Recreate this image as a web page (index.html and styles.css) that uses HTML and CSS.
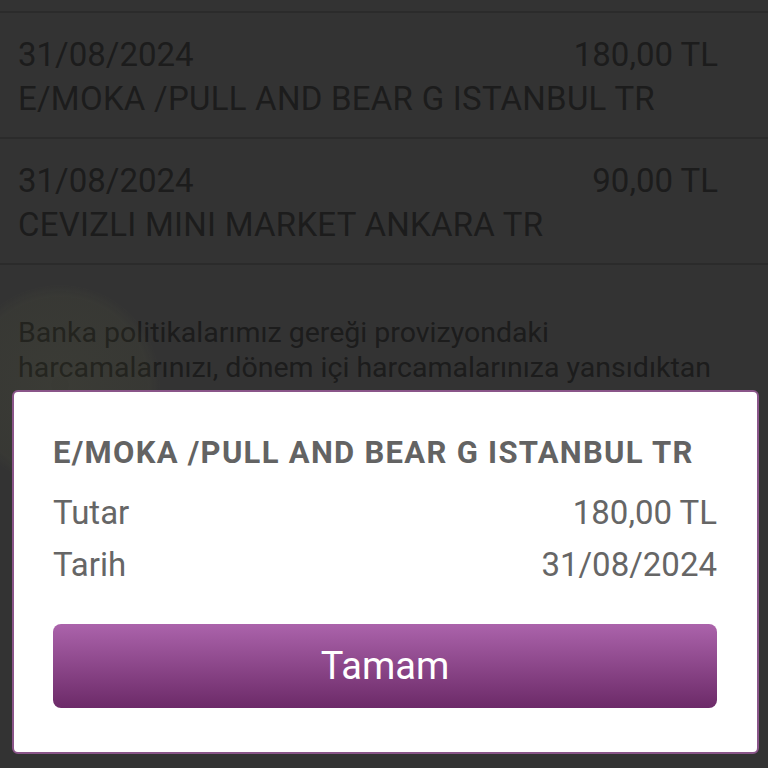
FILE: index.html
```html
<!DOCTYPE html>
<html lang="tr">
<head>
    <meta charset="UTF-8">
    <meta name="viewport" content="width=device-width, initial-scale=1.0">
    <title>Provizyondaki Harcamalar</title>
    <link rel="stylesheet" href="styles.css">
</head>
<body>
    <div class="page">
        <div class="list">
            <div class="row-prev"></div>

            <div class="row">
                <div class="row-top">
                    <span class="date">31/08/2024</span>
                    <span class="amount">180,00 TL</span>
                </div>
                <div class="merchant">E/MOKA /PULL AND BEAR G ISTANBUL TR</div>
            </div>

            <div class="row">
                <div class="row-top">
                    <span class="date">31/08/2024</span>
                    <span class="amount">90,00 TL</span>
                </div>
                <div class="merchant">CEVIZLI MINI MARKET ANKARA TR</div>
            </div>
        </div>

        <p class="note">
            Banka politikalarımız gereği provizyondaki harcamalarınızı, dönem içi harcamalarınıza yansıdıktan sonra ekstrenizde görüntüleyebilirsiniz.
        </p>
    </div>

    <!-- Detay penceresi -->
    <div class="overlay"></div>
    <div class="blob"></div>

    <div class="dialog">
        <h3 class="dialog-title">E/MOKA /PULL AND BEAR G ISTANBUL TR</h3>
        <div class="dialog-row">
            <span>Tutar</span>
            <span>180,00 TL</span>
        </div>
        <div class="dialog-row">
            <span>Tarih</span>
            <span>31/08/2024</span>
        </div>
        <button class="btn-ok">Tamam</button>
    </div>
</body>
</html>
```

FILE: styles.css
```css
body {
    margin: 0;
    background-color: #ffffff;
    font-family: Roboto, "Noto Sans", sans-serif;
    overflow: hidden;
}
.page {
    height: 768px;
}
.row-prev {
    height: 11px;
    border-bottom: 2px solid #d4d4d4;
}
.row {
    padding: 20px 50px 16px 18px;
    border-bottom: 2px solid #d4d4d4;
    color: #8c8c8c;
    font-size: 33px;
    line-height: 44px;
}
.row-top {
    display: flex;
    justify-content: space-between;
}
.merchant {
    white-space: nowrap;
    letter-spacing: 0.25px;
}
.note {
    margin: 0;
    padding: 50px 18px 0 18px;
    font-size: 28.5px;
    line-height: 35px;
    color: #8c8c8c;
}
.overlay {
    position: fixed;
    top: 0;
    left: 0;
    right: 0;
    bottom: 0;
    background-color: rgba(0, 0, 0, 0.8);
}
.blob {
    position: fixed;
    left: -40px;
    top: 285px;
    width: 200px;
    height: 200px;
    border-radius: 50%;
    background: radial-gradient(circle, rgba(150, 160, 80, 0.07) 0%, rgba(150, 160, 80, 0.05) 62%, rgba(150, 160, 80, 0) 72%);
}
.dialog {
    position: fixed;
    left: 12px;
    right: 9px;
    bottom: 14px;
    padding: 43px 40px 44px 39px;
    background-color: #ffffff;
    border: 2px solid #8a5589;
    border-radius: 6px;
    color: #666666;
}
.dialog-title {
    margin: 0 0 16px 0;
    font-size: 31px;
    line-height: 36px;
    font-weight: 700;
    letter-spacing: 1.3px;
    color: #636363;
    white-space: nowrap;
}
.dialog-row {
    display: flex;
    justify-content: space-between;
    font-size: 33px;
    line-height: 52px;
}
.btn-ok {
    display: block;
    width: 100%;
    height: 84px;
    margin-top: 33px;
    border: none;
    border-radius: 8px;
    background: linear-gradient(to bottom, #ab63ab, #6c2a68);
    color: #ffffff;
    font-family: Roboto, "Noto Sans", sans-serif;
    font-size: 38px;
    cursor: pointer;
}
```
